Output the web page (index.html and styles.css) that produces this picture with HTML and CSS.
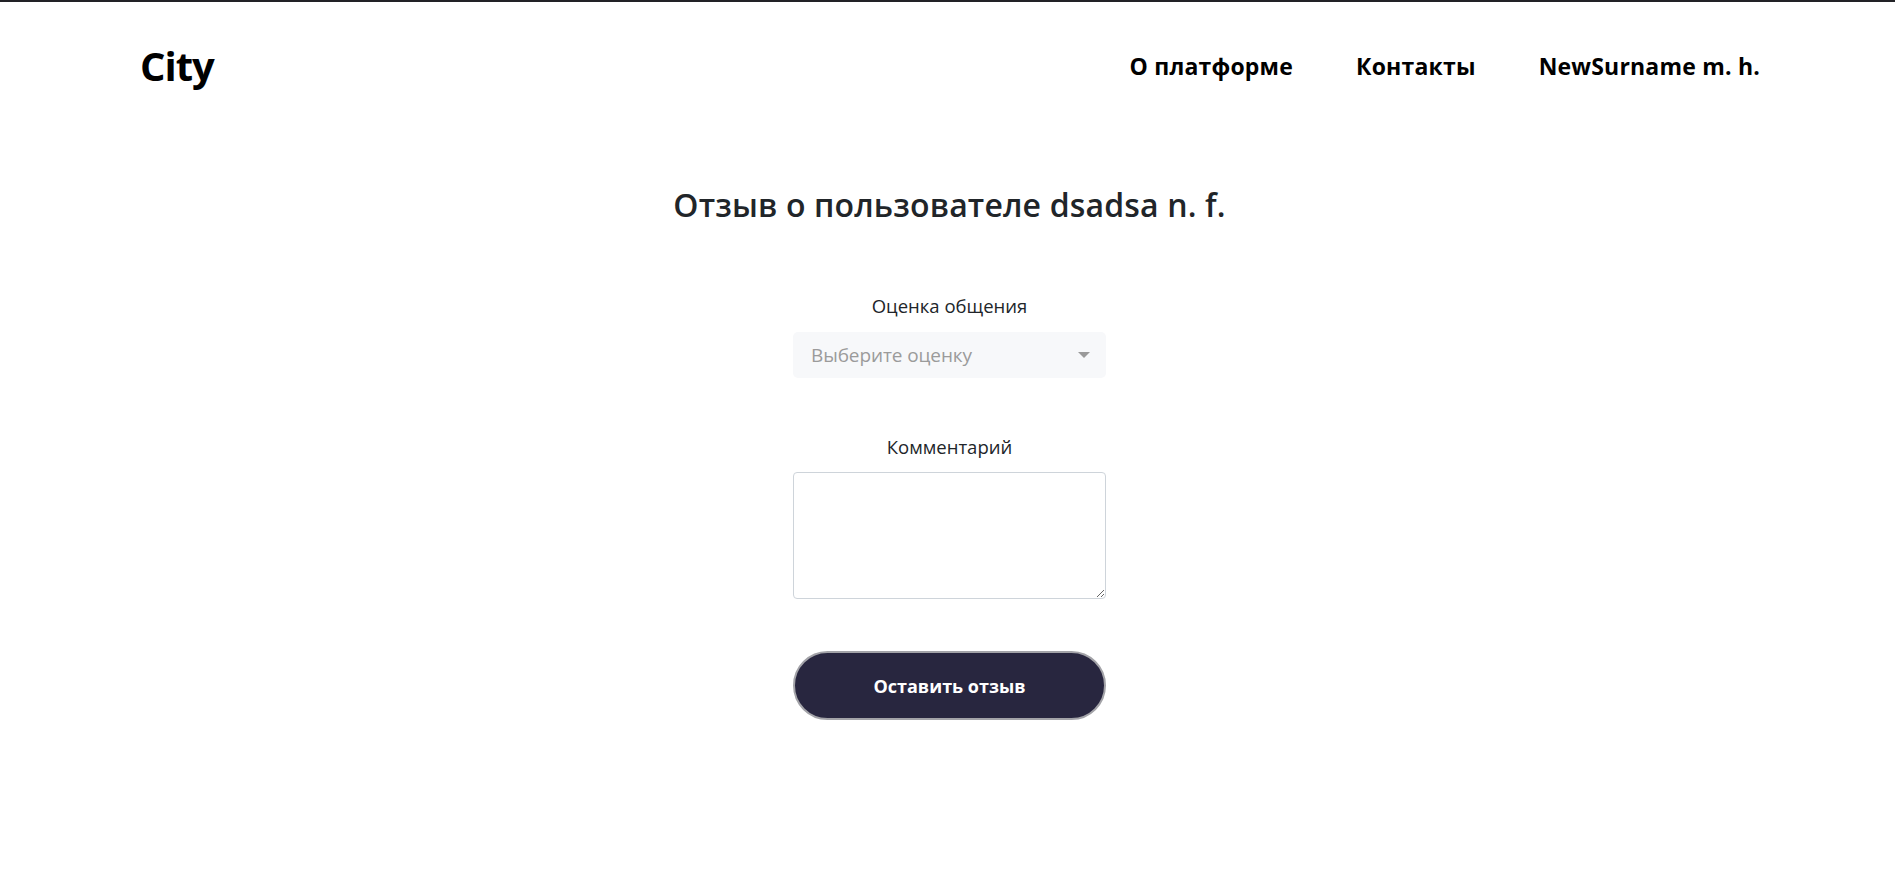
FILE: index.html
```html
<!DOCTYPE html>
<html lang="ru">
<head>
<meta charset="utf-8">
<title>City</title>
<link rel="stylesheet" href="styles.css">
</head>
<body>
<header class="header">
  <a class="logo" href="#">City</a>
  <nav class="nav">
    <a class="nav-link" href="#">О платформе</a>
    <a class="nav-link" href="#">Контакты</a>
    <a class="nav-link" href="#">NewSurname m. h.</a>
  </nav>
</header>
<main class="main">
  <h1 class="title">Отзыв о пользователе dsadsa n. f.</h1>
  <form class="form">
    <label class="label" for="rating">Оценка общения</label>
    <div class="select" id="rating">
      <span class="placeholder">Выберите оценку</span>
      <span class="caret"></span>
    </div>
    <label class="label label-comment" for="comment">Комментарий</label>
    <textarea class="textarea" id="comment"></textarea>
    <button class="submit" type="button">Оставить отзыв</button>
  </form>
</main>
</body>
</html>
```

FILE: styles.css
```css
* { box-sizing: border-box; }
html, body { margin: 0; padding: 0; background: #fff; }
body {
  border-top: 2px solid #222226;
  font-family: "Open Sans", "Noto Sans", sans-serif;
  color: #212529;
}
.header {
  display: flex;
  justify-content: space-between;
  align-items: center;
  height: 128px;
  padding: 0 135px 0 140px;
}
.logo {
  font-size: 40px;
  font-weight: 700;
  color: #000;
  text-decoration: none;
  line-height: 48px;
  letter-spacing: -1px;
}
.nav {
  display: flex;
  gap: 63px;
}
.nav-link {
  font-size: 23px;
  font-weight: 700;
  color: #000;
  text-decoration: none;
  line-height: 30px;
  letter-spacing: 0.2px;
}
.main {
  display: flex;
  flex-direction: column;
  align-items: center;
  padding-left: 4px;
}
.title {
  margin: 56px 0 0;
  font-size: 32px;
  font-weight: 600;
  line-height: 38px;
  color: #212529;
  letter-spacing: 0.15px;
}
.form {
  display: flex;
  flex-direction: column;
  align-items: center;
  width: 313px;
  margin-top: 69px;
}
.label {
  font-size: 18.5px;
  line-height: 26px;
  color: #212529;
}
.select {
  margin-top: 13px;
  width: 100%;
  height: 46px;
  background: #f7f8fa;
  border-radius: 5px;
  display: flex;
  align-items: center;
  justify-content: space-between;
  padding: 0 16px 0 18px;
}
.placeholder {
  font-size: 19px;
  color: #9b9b9b;
  letter-spacing: -0.1px;
}
.caret {
  width: 0;
  height: 0;
  border-left: 6px solid transparent;
  border-right: 6px solid transparent;
  border-top: 6px solid #9a9a9a;
}
.label-comment {
  margin-top: 56px;
}
.textarea {
  margin-top: 12px;
  width: 100%;
  height: 127px;
  border: 1px solid #ced4da;
  border-radius: 4px;
  font-family: inherit;
  font-size: 16px;
  padding: 6px 12px;
  background: #fff;
}
.submit {
  margin-top: 52px;
  width: 313px;
  height: 69px;
  border-radius: 35px;
  background: #28263f;
  border: 2px solid #a3a3a8;
  color: #fff;
  font-family: inherit;
  font-size: 18px;
  font-weight: 700;
  cursor: pointer;
}
```
